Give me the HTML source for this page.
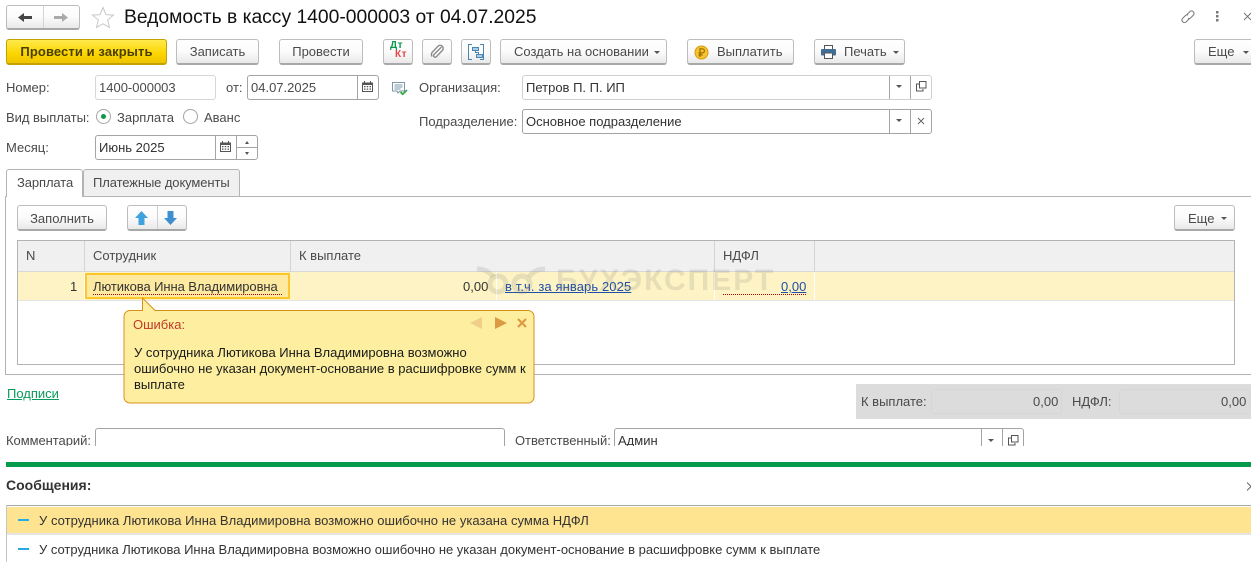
<!DOCTYPE html>
<html lang="ru"><head><meta charset="utf-8"><title>Ведомость в кассу</title>
<style>
html,body{margin:0;padding:0;background:#fff}
#p{position:relative;width:1251px;height:562px;overflow:hidden;background:#fff;font:13px/14px "Liberation Sans",sans-serif;color:#4a4a4a}
#p div,#p svg,#p a{position:absolute}
.t{white-space:nowrap;height:14px}
.b{box-sizing:border-box;height:26px;border:1px solid #bdbdbd;border-bottom:2px solid #a8a8a8;border-radius:3px;background:linear-gradient(#fff 0,#fbfbfb 50%,#e9e9e9 100%);text-align:center;line-height:24px;white-space:nowrap;color:#4a4a4a}
.f{box-sizing:border-box;height:25px;border:1px solid #a4a4a4;border-radius:3px;background:#fff}
.l{background:#a4a4a4;width:1px}
.tri{width:0;height:0;border-left:3px solid transparent;border-right:3px solid transparent;border-top:3px solid #555}
.hd{background:#f0f0f0}
a{color:#1f4fa8;text-decoration:underline}
</style></head><body><div id="p">

<!-- nav -->
<div class="b" style="left:6px;top:5px;width:74px;height:25px"></div>
<div class="l" style="left:43px;top:6px;height:22px;background:#d4d4d4"></div>
<svg style="left:18px;top:12px" width="14" height="11" viewBox="0 0 14 11"><path d="M0 5.500 6 1v3h8v3H6v3z" fill="#444"/></svg>
<svg style="left:54px;top:12px" width="14" height="11" viewBox="0 0 14 11"><path d="M14 5.500 8 1v3H0v3h8v3z" fill="#aaa"/></svg>
<svg style="left:91px;top:6px" width="24" height="23" viewBox="0 0 24 23"><path d="M12 1.500l2.900 7.100 7.600.5-5.900 4.900 1.900 7.400L12 17.800l-6.500 3.600 1.900-7.400L1.500 9.100l7.600-.5z" fill="#fff" stroke="#c8c8c8"/></svg>
<div class="t" style="left:124px;top:7px;height:21px;line-height:21px;font-size:19.3px;color:#111">Ведомость в кассу 1400-000003 от 04.07.2025</div>

<svg style="left:1179px;top:8px" width="18" height="18" viewBox="0 0 18 18" fill="none" stroke="#777"><path d="M7.500 7 11 3.500a2.500 2.500 0 0 1 3.500 3.500L11.500 10a2.500 2.500 0 0 1-2.500.5"/><path d="M10.500 10.500 7 14a2.500 2.500 0 0 1-3.500-3.500L6.500 7.500A2.500 2.500 0 0 1 9 7"/></svg>
<svg style="left:1215px;top:10px" width="5" height="13" viewBox="0 0 5 13" fill="#777"><rect x="1" y="1" width="2.500" height="2.500"/><rect x="1" y="5" width="2.500" height="2.500"/><rect x="1" y="9" width="2.500" height="2.500"/></svg>
<svg style="left:1243px;top:12px" width="8" height="10" viewBox="0 0 8 10" fill="none" stroke="#777"><path d="M1 1l7 7M8 1 1 8"/></svg>

<!-- command bar -->
<div class="b" style="left:6px;top:39px;width:161px;background:linear-gradient(#ffea4d,#fbd500 60%,#efc400);border-color:#c2a300;font-weight:bold;color:#4a3f00;letter-spacing:.1px">Провести и закрыть</div>
<div class="b" style="left:176px;top:39px;width:83px">Записать</div>
<div class="b" style="left:279px;top:39px;width:84px">Провести</div>
<div class="b" style="left:383px;top:39px;width:30px"></div>
<div class="t" style="left:390px;top:41px;font-size:10px;font-weight:bold;color:#0a9a4a;line-height:10px;letter-spacing:.5px">Дт</div>
<div class="t" style="left:395px;top:50px;font-size:10px;font-weight:bold;color:#e8454a;line-height:10px;letter-spacing:.5px">Кт</div>
<div class="b" style="left:422px;top:39px;width:30px"></div>
<svg style="left:429px;top:43px" width="16" height="17" viewBox="0 0 16 17" fill="none" stroke="#8a8a8a" stroke-width="1.400"><path d="M12.500 4 5 11.500a1.600 1.600 0 0 0 2.300 2.300l6-6.300a3 3 0 0 0-4.300-4.300L3 9.500a4 4 0 0 0 0 4"/></svg>
<div class="b" style="left:461px;top:39px;width:30px"></div>
<svg style="left:468px;top:44px" width="16" height="16" viewBox="0 0 16 16" fill="none" stroke="#4c86b0"><path d="M4 .5H.5v15H4M12 .5h3.500v15H12"/><rect x="4.500" y="3.500" width="6" height="3" fill="#a8cde6"/><rect x="8.500" y="10.500" width="6" height="3" fill="#a8cde6"/><path d="M7.500 6.500v2h3v2"/></svg>
<div class="b" style="left:500px;top:39px;width:167px;text-align:left;padding-left:13px">Создать на основании</div>
<div class="tri" style="left:654px;top:51px"></div>
<div class="b" style="left:687px;top:39px;width:107px;text-align:left;padding-left:29px">Выплатить</div>
<svg style="left:694px;top:45px" width="15" height="15" viewBox="0 0 15 15"><circle cx="7.500" cy="7.500" r="6.500" fill="#f6c42c" stroke="#d69a12"/><path d="M6 12V3.800h2.300a2 2 0 0 1 0 4.200H4.500M4.500 10H8.500" fill="none" stroke="#9c6b06" stroke-width="1.200"/></svg>
<div class="b" style="left:814px;top:39px;width:91px;text-align:left;padding-left:29px">Печать</div>
<svg style="left:821px;top:45px" width="15" height="14" viewBox="0 0 15 14"><rect x="3.500" y=".5" width="8" height="4" fill="#fff" stroke="#555"/><rect x="0" y="4" width="15" height="6.500" rx="1" fill="#3f6f96"/><rect x="3.500" y="8" width="8" height="5.500" fill="#fff" stroke="#555"/></svg>
<div class="tri" style="left:893px;top:51px"></div>
<div class="b" style="left:1194px;top:39px;width:60px;text-align:left;padding-left:13px">Еще</div>
<div class="tri" style="left:1243px;top:51px"></div>

<!-- fields -->
<div class="t" style="left:6px;top:81px">Номер:</div>
<div class="f" style="left:95px;top:75px;width:121px;border-color:#d6d6d6"></div>
<div class="t" style="left:99px;top:81px">1400-000003</div>
<div class="t" style="left:226px;top:81px">от:</div>
<div class="f" style="left:247px;top:75px;width:132px"></div>
<div class="l" style="left:357px;top:76px;height:23px"></div>
<div class="t" style="left:251px;top:81px">04.07.2025</div>
<svg style="left:362px;top:81px" width="11" height="11" viewBox="0 0 11 11"><path d="M0 1.500h11V11H0z" fill="#555"/><path d="M1 4h9v6H1z" fill="#fff"/><path d="M2.500 0v2M8.500 0v2" stroke="#555"/><path d="M2 5h1.500v1.200H2zM4.700 5h1.500v1.200H4.700zM7.500 5H9v1.200H7.500zM2 7.500h1.500v1.200H2zM4.700 7.500h1.500v1.200H4.700zM7.500 7.500H9v1.200H7.500z" fill="#555"/></svg>
<svg style="left:392px;top:82px" width="16" height="14" viewBox="0 0 16 14"><path d="M.5.500h12v8.500H8l-2 2-1-2H.5z" fill="#fff" stroke="#7b98a8"/><path d="M2.500 3h8M2.500 5h8M2.500 7h6" stroke="#7b98a8"/><path d="M8.500 10l2.200 2.200L15 8" fill="none" stroke="#3aa94a" stroke-width="1.800"/></svg>

<div class="t" style="left:419px;top:81px;letter-spacing:-.03px">Организация:</div>
<div class="f" style="left:522px;top:75px;width:410px;border-color:#d0d0d0"></div>
<div class="l" style="left:889px;top:76px;height:23px"></div>
<div class="l" style="left:910px;top:76px;height:23px"></div>
<div class="t" style="left:526px;top:81px;color:#333">Петров П. П. ИП</div>
<div class="tri" style="left:896px;top:85px"></div>
<svg style="left:916px;top:81px" width="11" height="11" viewBox="0 0 11 11" fill="none" stroke="#555"><path d="M3 3H.5v7H7V8"/><rect x="3.500" y=".5" width="6.500" height="6.500"/></svg>

<div class="t" style="left:419px;top:115px">Подразделение:</div>
<div class="f" style="left:522px;top:109px;width:410px"></div>
<div class="l" style="left:889px;top:110px;height:23px"></div>
<div class="l" style="left:910px;top:110px;height:23px"></div>
<div class="t" style="left:526px;top:115px;color:#333">Основное подразделение</div>
<div class="tri" style="left:896px;top:119px"></div>
<svg style="left:917px;top:117px" width="8" height="8" viewBox="0 0 8 8" fill="none" stroke="#666"><path d="M1 1l6 6M7 1 1 7"/></svg>

<div class="t" style="left:6px;top:111px;letter-spacing:-.03px">Вид выплаты:</div>
<svg style="left:96px;top:109px" width="16" height="16" viewBox="0 0 16 16"><circle cx="7.500" cy="7.500" r="7" fill="#fff" stroke="#a4a4a4"/><circle cx="7.500" cy="7.500" r="2.500" fill="#0a9a4a"/></svg>
<div class="t" style="left:117px;top:111px">Зарплата</div>
<svg style="left:183px;top:109px" width="16" height="16" viewBox="0 0 16 16"><circle cx="7.500" cy="7.500" r="7" fill="#fff" stroke="#a4a4a4"/></svg>
<div class="t" style="left:204px;top:111px">Аванс</div>

<div class="t" style="left:6px;top:141px">Месяц:</div>
<div class="f" style="left:95px;top:135px;width:163px"></div>
<div class="l" style="left:215px;top:136px;height:23px"></div>
<div class="l" style="left:236px;top:136px;height:23px"></div>
<div class="l" style="left:237px;top:147px;width:20px;height:1px"></div>
<div class="t" style="left:99px;top:141px;color:#333">Июнь 2025</div>
<svg style="left:220px;top:141px" width="11" height="11" viewBox="0 0 11 11"><path d="M0 1.500h11V11H0z" fill="#555"/><path d="M1 4h9v6H1z" fill="#fff"/><path d="M2.500 0v2M8.500 0v2" stroke="#555"/><path d="M2 5h1.500v1.200H2zM4.700 5h1.500v1.200H4.700zM7.500 5H9v1.200H7.500zM2 7.500h1.500v1.200H2zM4.700 7.500h1.500v1.200H4.700zM7.500 7.500H9v1.200H7.500z" fill="#555"/></svg>
<div style="left:245px;top:141px;width:0;height:0;border:2px solid transparent;border-bottom:3px solid #555;border-top:0"></div>
<div style="left:245px;top:152px;width:0;height:0;border:2px solid transparent;border-top:3px solid #555;border-bottom:0"></div>

<!-- tabs -->
<div style="left:5px;top:196px;width:1246px;height:1px;background:#b4b4b4"></div>
<div style="left:5px;top:196px;width:1px;height:179px;background:#b4b4b4"></div>
<div style="left:5px;top:374px;width:1246px;height:1px;background:#b4b4b4"></div>
<div style="box-sizing:border-box;left:83px;top:169px;width:157px;height:28px;background:#f0f0f0;border:1px solid #b4b4b4;border-radius:3px 3px 0 0"></div>
<div style="box-sizing:border-box;left:6px;top:169px;width:77px;height:28px;background:#fff;border:1px solid #b4b4b4;border-bottom:0;border-radius:3px 3px 0 0"></div>
<div class="t" style="left:17px;top:176px;letter-spacing:-.1px">Зарплата</div>
<div class="t" style="left:93px;top:176px;letter-spacing:-.1px">Платежные документы</div>

<div class="b" style="left:17px;top:205px;width:90px;line-height:25px">Заполнить</div>
<div class="b" style="left:127px;top:205px;width:60px"></div>
<div class="l" style="left:157px;top:206px;height:23px;background:#d0d0d0"></div>
<svg style="left:135px;top:211px" width="13" height="14" viewBox="0 0 13 14"><path d="M6.500 0 13 7H9.500v7h-6V7H0z" fill="#3fa2de"/></svg>
<svg style="left:164px;top:211px" width="13" height="14" viewBox="0 0 13 14"><path d="M6.500 14 13 7H9.500V0h-6v7H0z" fill="#3f8fd0"/></svg>
<div class="b" style="left:1174px;top:205px;width:61px;text-align:left;padding-left:13px;line-height:25px">Еще</div>
<div class="tri" style="left:1221px;top:217px"></div>

<!-- table -->
<div style="box-sizing:border-box;left:17px;top:240px;width:1218px;height:125px;border:1px solid #b4b4b4;background:#fff"></div>
<div class="hd" style="left:18px;top:241px;width:1216px;height:30px"></div>
<div style="left:18px;top:271px;width:1216px;height:1px;background:#d8d8d8"></div>
<div class="l" style="left:84px;top:241px;height:30px;background:#d4d4d4"></div>
<div class="l" style="left:290px;top:241px;height:30px;background:#d4d4d4"></div>
<div class="l" style="left:714px;top:241px;height:30px;background:#d4d4d4"></div>
<div class="l" style="left:814px;top:241px;height:30px;background:#d4d4d4"></div>
<div class="t" style="left:26px;top:249px">N</div>
<div class="t" style="left:93px;top:249px">Сотрудник</div>
<div class="t" style="left:299px;top:249px">К выплате</div>
<div class="t" style="left:723px;top:249px">НДФЛ</div>
<div style="left:18px;top:272px;width:1216px;height:28px;background:#fdf3c4"></div>
<div style="left:18px;top:300px;width:1216px;height:1px;background:#e4e4e4"></div>
<div class="l" style="left:84px;top:272px;height:28px;background:#fff"></div>
<div class="l" style="left:496px;top:272px;height:28px;background:#fff"></div>
<div class="l" style="left:714px;top:272px;height:28px;background:#fff"></div>
<div class="l" style="left:814px;top:272px;height:28px;background:#fff"></div>
<div style="box-sizing:border-box;left:85px;top:273px;width:205px;height:26px;border:2px solid #fcc72c;background:#fde9a0"></div>
<div class="t" style="left:70px;top:280px;color:#333">1</div>
<div class="t" style="left:93px;top:280px;color:#333;letter-spacing:-.08px">Лютикова Инна Владимировна</div>
<div style="left:93px;top:294px;width:189px;border-top:1px dotted #b00000"></div>
<div class="t" style="left:463px;top:280px;color:#333">0,00</div>
<a class="t" style="left:505px;top:280px;letter-spacing:.1px">в т.ч. за январь 2025</a>
<a class="t" style="left:781px;top:280px">0,00</a>
<div style="left:723px;top:294px;width:83px;border-top:1px dotted #b00000"></div>

<!-- watermark -->
<div class="t" style="left:556px;top:264px;height:34px;font-size:30px;line-height:34px;font-weight:bold;letter-spacing:2px;color:rgba(110,110,110,.16)">БУХЭКСПЕРТ</div>
<svg style="left:476px;top:263px" width="72" height="32" viewBox="0 0 72 32" fill="none" stroke="rgba(110,110,110,.16)" stroke-width="5"><circle cx="22" cy="21" r="8"/><circle cx="46" cy="21" r="8"/><path d="M1 6c6 0 12 2 16 8M69 6c-6 0-12 2-16 8"/></svg>

<!-- tooltip -->
<svg style="left:123px;top:297px" width="413" height="108" viewBox="0 0 413 108"><path d="M7.500 13.500H19.500V1L32 13.500H405a6 6 0 0 1 6 6V100a6 6 0 0 1-6 6H7a6 6 0 0 1-6-6V19.500a6 6 0 0 1 6-6z" fill="#fdef9f" stroke="#d8901c"/></svg>
<div class="t" style="left:133px;top:318px;color:#c0392b">Ошибка:</div>
<svg style="left:469px;top:317px" width="14" height="12"><path d="M13 0v12L1 6z" fill="#f0cf8a"/></svg>
<svg style="left:494px;top:317px" width="14" height="12"><path d="M1 0v12L13 6z" fill="#dc9a44"/></svg>
<svg style="left:517px;top:318px" width="11" height="11" fill="none" stroke="#dc9a44" stroke-width="2.200"><path d="M1 1l8 8M9 1 1 9"/></svg>
<div class="t" style="left:134px;top:346px;color:#1a1a1a">У сотрудника Лютикова Инна Владимировна возможно</div>
<div class="t" style="left:134px;top:362px;color:#1a1a1a">ошибочно не указан документ-основание в расшифровке сумм к</div>
<div class="t" style="left:134px;top:378px;color:#1a1a1a">выплате</div>

<a class="t" style="left:7px;top:387px;color:#0b9a5e">Подписи</a>

<!-- totals -->
<div style="left:856px;top:384px;width:395px;height:35px;background:#dcdcdc"></div>
<div style="box-sizing:border-box;left:931px;top:389px;width:131px;height:25px;border:1px solid #d6d6d6;border-radius:3px"></div>
<div style="box-sizing:border-box;left:1119px;top:389px;width:131px;height:25px;border:1px solid #d6d6d6;border-radius:3px"></div>
<div class="t" style="left:861px;top:395px">К выплате:</div>
<div class="t" style="left:1033px;top:395px">0,00</div>
<div class="t" style="left:1072px;top:395px">НДФЛ:</div>
<div class="t" style="left:1221px;top:395px">0,00</div>

<!-- clipped row -->
<div style="left:0;top:420px;width:1251px;height:26px;overflow:hidden">
<div class="t" style="left:6px;top:14px;letter-spacing:-.05px">Комментарий:</div>
<div class="f" style="left:95px;top:8px;width:410px"></div>
<div class="t" style="left:515px;top:14px;letter-spacing:-.05px">Ответственный:</div>
<div class="f" style="left:614px;top:8px;width:410px"></div>
<div class="l" style="left:981px;top:9px;height:23px"></div>
<div class="l" style="left:1002px;top:9px;height:23px"></div>
<div class="t" style="left:618px;top:14px;color:#333">Админ</div>
<div class="tri" style="left:988px;top:19px"></div>
<svg style="left:1008px;top:15px" width="11" height="11" viewBox="0 0 11 11" fill="none" stroke="#555"><path d="M3 3H.5v7H7V8"/><rect x="3.500" y=".5" width="6.500" height="6.500"/></svg>
</div>

<!-- messages -->
<div style="left:6px;top:462px;width:1245px;height:5px;background:#069a4c"></div>
<div class="t" style="left:6px;top:478px;font-size:14px;font-weight:bold;color:#333">Сообщения:</div>
<svg style="left:1247px;top:482px" width="4" height="9" fill="none" stroke="#666"><path d="M0 .5 4 4.500 0 8.500"/></svg>
<div style="left:6px;top:505px;width:1245px;height:1px;background:#a8a8a8"></div>
<div style="left:6px;top:505px;width:1px;height:57px;background:#c4c4c4"></div>
<div style="left:7px;top:507px;width:1244px;height:26px;background:#fee490"></div>
<div style="left:7px;top:533px;width:1244px;height:2px;background:#e4e4e4"></div>
<div style="left:18px;top:519px;width:11px;height:2px;background:#29abe2"></div>
<div style="left:18px;top:548px;width:11px;height:2px;background:#29abe2"></div>
<div class="t" style="left:39px;top:514px;color:#333;letter-spacing:.04px">У сотрудника Лютикова Инна Владимировна возможно ошибочно не указана сумма НДФЛ</div>
<div class="t" style="left:39px;top:543px;color:#333;letter-spacing:-.01px">У сотрудника Лютикова Инна Владимировна возможно ошибочно не указан документ-основание в расшифровке сумм к выплате</div>

</div></body></html>
